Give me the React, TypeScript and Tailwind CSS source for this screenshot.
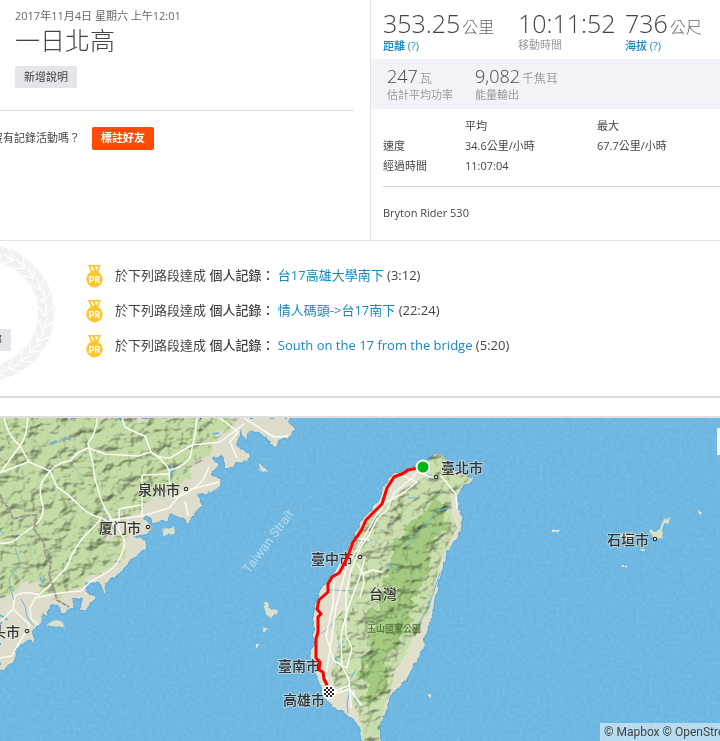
const stats = [
    { value: "353.25", unit: "公里", label: "距離 (?)", link: true },
    { value: "10:11:52", unit: "", label: "移動時間", link: false },
    { value: "736", unit: "公尺", label: "海拔 (?)", link: true },
];

const power = [
    { value: "247", unit: "瓦", label: "估計平均功率" },
    { value: "9,082", unit: "千焦耳", label: "能量輸出" },
];

const records = [
    { segment: "台17高雄大學南下", time: "(3:12)" },
    { segment: "情人碼頭->台17南下", time: "(22:24)" },
    { segment: "South on the 17 from the bridge", time: "(5:20)" },
];

// map labels, dot = city marker
const cities = [
    { name: "泉州市", x: 138, y: 77, dot: [186, 71] },
    { name: "厦门市", x: 99, y: 115, dot: [148, 109] },
    { name: "汕头市", x: -22, y: 219, dot: [27, 213] },
    { name: "臺北市", x: 441, y: 55, dot: [436, 59] },
    { name: "臺中市", x: 311, y: 146, dot: [360, 139] },
    { name: "臺南市", x: 278, y: 253, dot: [319, 247] },
    { name: "高雄市", x: 283, y: 287, dot: null },
    { name: "石垣市", x: 607, y: 127, dot: [655, 121] },
    { name: "台灣", x: 369, y: 181, dot: null },
];

const MAINLAND =
    "M0 0H290L288 4L294 10L289 22L281 20L277 24L274 30L270 28L267 20L257 14L248 12L246 22L242 18L241 12L236 22L240 31L250 37L247 44L236 43L232 50L226 50L223 38L213 40L218 47L212 57L220 62L219 68L213 74L197 76L202 87L194 95L188 105L182 99L170 95L168 102L153 105L147 95L143 101L152 108L147 115L133 119L145 122L147 129L133 139L128 146L120 154L115 159L105 165L104 177L100 165L85 164L86 174L95 179L92 184L87 192L80 192L83 180L73 179L72 190L62 194L58 186L50 188L48 197L43 194L40 205L32 213L34 225L27 222L15 232L14 245L0 252Z";

const MAINLAND_HILLS =
    "M0 0H240L214 24L205 42L192 48L180 72L166 74L150 80L138 95L108 104L105 112L124 120L126 140L103 156L82 158L78 171L58 177L45 174L35 164L15 170L12 178L0 180Z";

const TAIWAN =
    "M423 49L428 41L435 35L443 38L446 47L460 54L473 60L463 69L457 78L458 91L463 102L457 119L445 135L446 141L441 155L437 175L430 202L422 232L413 249L405 264L392 275L388 289L380 305V323H362L358 305L348 298L337 290L325 281L318 262L315 246L309 239L314 228V195L319 175L331 160L341 148L352 122L362 102L378 85L384 69L393 56L407 51Z";

const TAIWAN_HILLS =
    "M428 41L435 35L443 38L446 47L460 55L472 60L461 68L456 78L450 74L453 100L457 110L442 137L437 158L429 190L417 215L407 233L394 255L391 273L381 300L379 323H364L360 300L353 287L356 271L336 273L331 255L338 228L335 202L347 188L350 170L352 130L358 112L372 100L388 86L402 72L420 62L430 56Z";

const TAIWAN_RIDGE =
    "M437 77L445 88L443 106L431 132L428 151L423 170L414 188L402 220L389 238L386 260L374 285L366 295L370 270L362 259L364 239L374 219L371 199L380 179L385 158L397 137L396 121L414 105L424 91Z";

const ROUTE =
    "M423 49L408 52L404 55L394 59L387 70L382 86L375 93L366 102L361 113L353 124L348 138L342 150L339 155L332 159L328 166L328 174L319 182L317 191L321 196L318 199L318 214L316 221L316 240L320 244L319 252L323 254L324 261L328 269";

function Laurel() {
    // leaves around the ring, one pair for every step
    const steps = Array.from({ length: 15 }, (_, i) => -92 + i * 13);
    return (
        <svg viewBox="0 0 56 140" className="h-[140px] w-14" aria-hidden="true">
            <g transform="translate(-14 70)">
                <circle r="60" fill="none" stroke="#f2f2f2" strokeWidth="16" />
                {steps.map((a) => (
                    <path
                        key={a}
                        d="M51 -6L59 4L70 -8M59 4L61 -8"
                        fill="none"
                        stroke="#fff"
                        strokeWidth="1.2"
                        transform={`rotate(${a})`}
                    />
                ))}
            </g>
        </svg>
    );
}

function Medal() {
    return (
        <svg viewBox="0 0 17 24" className="h-6 w-[17px] shrink-0" aria-hidden="true">
            <path d="M2 1H15L12 8.500H5Z" fill="#ffc72f" />
            <path d="M4.500 2.500H6.500L8.500 6.500H6.500ZM9 2.500H12.500L10.500 6.500Z" fill="#fff" />
            <circle cx="8.500" cy="15.200" r="8.200" fill="#ffc72f" />
            <text
                x="8.500"
                y="18.500"
                textAnchor="middle"
                fontFamily="Roboto, sans-serif"
                fontSize="9"
                fontWeight="700"
                fill="#fff"
            >
                PR
            </text>
        </svg>
    );
}

function RouteMap() {
    return (
        <svg
            viewBox="0 0 720 323"
            preserveAspectRatio="xMidYMid slice"
            className="block min-h-[323px] w-full bg-[#6db6e0]"
            role="img"
            aria-label="台灣"
        >
            <defs>
                <filter id="relief" x="0" y="0" width="100%" height="100%" colorInterpolationFilters="sRGB">
                    <feTurbulence type="fractalNoise" baseFrequency="0.06 0.08" numOctaves="3" seed="8" />
                    <feColorMatrix values="0 0 0 0 0  0 0 0 0 0  0 0 0 0 0  1 0 0 0 0" />
                    <feDiffuseLighting surfaceScale="6" diffuseConstant="1.2" lightingColor="#ffffff">
                        <feDistantLight azimuth="220" elevation="60" />
                    </feDiffuseLighting>
                </filter>
                <filter id="ripples" x="0" y="0" width="100%" height="100%" colorInterpolationFilters="sRGB">
                    <feTurbulence type="fractalNoise" baseFrequency="0.3" numOctaves="2" seed="3" />
                    <feColorMatrix values="0 0 0 0 0.6  0 0 0 0 0.85  0 0 0 0 0.97  1.6 0 0 0 -0.65" />
                </filter>
                <filter id="coast" colorInterpolationFilters="sRGB">
                    <feTurbulence type="fractalNoise" baseFrequency="0.12" numOctaves="2" seed="5" />
                    <feDisplacementMap in="SourceGraphic" scale="6" xChannelSelector="R" yChannelSelector="G" />
                </filter>
                {/* ragged edge between the plains and the hills */}
                <filter id="slopes" colorInterpolationFilters="sRGB">
                    <feTurbulence type="fractalNoise" baseFrequency="0.08" numOctaves="3" seed="11" />
                    <feDisplacementMap in="SourceGraphic" scale="22" xChannelSelector="R" yChannelSelector="G" />
                </filter>
                <clipPath id="hills">
                    <path d={MAINLAND_HILLS} />
                    <path d={TAIWAN_HILLS} />
                </clipPath>
            </defs>

            <rect width="720" height="323" fill="#6db6e0" />
            <rect width="720" height="323" filter="url(#ripples)" opacity="0.35" />

            {/* land */}
            <g filter="url(#coast)">
                <path d={MAINLAND} fill="#deddcb" stroke="#60a9d5" strokeWidth="2" paintOrder="stroke" />
                <path d={TAIWAN} fill="#e0e0cd" stroke="#60a9d5" strokeWidth="2" paintOrder="stroke" />
                <path d={TAIWAN_HILLS} fill="#cadeae" />
                <g fill="#dcdfca">
                    <path d="M257 46L263 49L267 54L261 53Z" />
                    <path d="M162 113L168 110L174 108L175 115L170 116L162 117Z" />
                    <path d="M47 205L55 202L63 203L64 209L50 208Z" />
                    <path d="M263 190L267 183L270 186L269 191L277 192L276 197L270 199Z" />
                    <path d="M262 210H266V213H262ZM256 226H258V229H256Z" />
                    <path d="M553 111H560V113H553ZM698 92L702 94L698 96Z" />
                    <path d="M621 116L632 114L634 119L628 121L620 119Z" fill="#cfe2ae" />
                    <path d="M649 112L657 113L662 108L667 99L670 98L664 108L662 121L654 122Z" />
                    <path d="M641 131H645V133H641ZM622 147H626V149H622ZM428 276H432V279H428Z" />
                </g>
            </g>
            <g filter="url(#slopes)">
                <path d={MAINLAND_HILLS} fill="#c4dba5" />
                <path d="M-12 -12H60V0H-12V180H-12Z" fill="#c4dba5" stroke="#c4dba5" strokeWidth="24" />
                <path d={TAIWAN_RIDGE} fill="#a3ca80" />
            </g>
            <rect
                width="720"
                height="323"
                clipPath="url(#hills)"
                filter="url(#relief)"
                opacity="0.6"
                className="mix-blend-multiply"
            />

            {/* inland water */}
            <g fill="none" stroke="#72b5de" strokeWidth="1">
                <path d="M50 26L57 23M62 22L67 20L71 22M171 47L173 53L170 56M213 16L219 15M184 53L187 51" strokeWidth="2" />
                <path d="M106 98L111 107L114 113M15 130L20 145L9 161L10 170L14 182M21 181L25 188L27 199L34 208M0 113L5 116" />
                <path d="M0 197L8 202M52 190L57 187M40 159L43 165" strokeWidth="2" />
                <path d="M452 89L437 93L426 106L414 119L408 128M408 80L416 80M425 55L432 58L428 62M353 121L362 123L372 122" />
                <path d="M440 155L433 176L428 189L418 208M330 172L354 173M322 215L334 205M350 270L347 286L348 295M356 252L343 272" />
                <path d="M387 146L393 150M343 223L339 230M335 240L338 247" strokeWidth="2" />
            </g>

            {/* roads */}
            <g fill="none" stroke="#fbfaf5" strokeWidth="1.500" strokeLinejoin="round">
                <path d="M4 0Q8 18 20 28L29 44L50 53L57 69Q66 74 80 88Q90 98 102 100L118 110L124 121Q125 130 122 135Q118 146 109 153L90 164L81 173Q60 174 35 180L30 190L31 201L39 207" />
                <path d="M28 0Q27 14 23 23L20 28L0 55L28 44M97 0Q97 14 88 25L93 46Q94 60 98 71Q101 84 107 94L112 102L134 109" />
                <path d="M50 53Q58 44 70 43Q78 33 88 30L105 36L138 38L151 34Q158 40 170 40Q180 34 192 27L220 24L244 6" />
                <path d="M122 0L125 9Q136 15 145 18L151 34Q164 42 169 52L170 75L176 80Q192 74 203 62L209 49M197 0L195 16L190 40Q182 50 169 52" />
                <path d="M220 0L238 14L230 24L237 40M244 0L274 19L288 18M143 57L169 56M142 57V98L109 102M0 125Q10 126 15 122L35 107Q44 100 43 88Q38 74 42 64L50 53" />
                <path d="M102 100L81 122L71 138Q68 150 62 154L51 166L39 177Q24 172 15 178L13 191L0 204M142 98L169 90L184 73L219 64M119 110V91L140 87M13 191L30 207L16 230L12 238L0 240M185 83L188 98" />
                <path d="M420 50L412 60L394 75L387 92L377 101L369 117L360 130L351 153L346 176L346 217L352 230L347 250L334 243L326 218L333 187L334 158L342 143" />
                <path d="M403 58L417 64L402 76L386 84L376 98L360 126L346 151L336 189L332 218L326 257L333 276L350 271M365 139L361 155L347 193L341 218L342 248L349 262L351 290" />
                <path d="M441 58L456 76L457 91M435 60L425 57M354 120L370 122M357 145L363 156L372 152L382 154M363 156L364 165L360 180M349 270L362 288M330 275L350 267" />
            </g>
            <path
                d="M0 76L3 85L9 90L13 101L24 98L36 97L34 111L44 125L45 137L51 145L49 157L54 171L57 182L69 189"
                fill="none"
                stroke="#9d9892"
                strokeWidth="2"
                strokeDasharray="5 1"
            />

            <text
                transform="translate(249 156) rotate(-53)"
                fontSize="13"
                fill="#b8daed"
                fontFamily="Roboto, sans-serif"
            >
                Taiwan Strait
            </text>

            {/* labels, with the pale halo under the glyphs */}
            <g
                fontSize="14"
                fontWeight="500"
                fill="#333"
                stroke="#eef2e8"
                strokeOpacity="0.5"
                strokeWidth="2"
                paintOrder="stroke"
            >
                {cities.map((city) => (
                    <text key={city.name} x={city.x} y={city.y}>
                        {city.name}
                    </text>
                ))}
                <text x="367" y="214" fontSize="9" fill="#4a7434" strokeWidth="0">
                    玉山國家公園
                </text>
            </g>
            {cities.map(
                (city) =>
                    city.dot && (
                        <circle
                            key={city.name}
                            cx={city.dot[0]}
                            cy={city.dot[1]}
                            r="1.700"
                            fill="#fff"
                            stroke="#333"
                            strokeWidth="1.200"
                        />
                    ),
            )}

            <path d={ROUTE} fill="none" stroke="#fe0000" strokeWidth="3" strokeLinejoin="round" />
            <circle cx="423" cy="49" r="6.500" fill="#00b50b" stroke="#fff" strokeWidth="2" />

            {/* finish flag */}
            <circle cx="329" cy="274" r="7" fill="#fff" />
            <g fill="#222">
                <path d="M326 269h2v2h-2zM330 269h2v2h-2zM324 271h2v2h-2zM328 271h2v2h-2zM332 271h2v2h-2zM326 273h2v2h-2zM330 273h2v2h-2zM324 275h2v2h-2zM328 275h2v2h-2zM332 275h2v2h-2zM326 277h2v2h-2zM330 277h2v2h-2z" />
            </g>
        </svg>
    );
}

export default function App() {
    return (
        <main className="overflow-hidden bg-white font-['Open_Sans','Noto_Sans_CJK_TC',sans-serif] text-[#444]">
            <section className="grid grid-cols-[37fr_35fr] border-b border-[#e4e4e8]">
                {/* SUMMARY */}
                <div className="min-w-0">
                    <div className="mr-4 border-b border-[#dfdfe8] pt-2 pb-[22px] pl-[15px]">
                        <time className="block text-[11px] leading-4 text-[#666]">2017年11月4日 星期六 上午12:01</time>
                        <h1 className="text-[25px] leading-8 font-light">一日北高</h1>
                        <button className="mt-[10px] h-[22px] rounded-xs bg-[#e5e4eb] px-[9px] text-[11px] leading-[22px]">
                            新增說明
                        </button>
                    </div>
                    <div className="-ml-2 flex items-center gap-3 pt-4 text-[11px]">
                        <p className="whitespace-nowrap">沒有記錄活動嗎？</p>
                        <button className="h-[23px] rounded-xs bg-[#fc4c02] px-[9px] font-bold text-white">標註好友</button>
                    </div>
                </div>

                {/* STATS */}
                <div className="min-w-0 border-l border-[#e4e4e8]">
                    <ul className="grid grid-cols-[135px_107px_1fr] pt-2 pb-[6px] pl-3 whitespace-nowrap">
                        {stats.map((item) => (
                            <li key={item.label}>
                                <div className="text-[25px] leading-[30px] font-light">
                                    {item.value}
                                    {item.unit && <span className="ml-[2px] text-base text-[#666]">{item.unit}</span>}
                                </div>
                                {item.link ? (
                                    <a href="#" className="block text-[11px] leading-[14px] font-medium text-[#1688bd]">
                                        {item.label}
                                    </a>
                                ) : (
                                    <div className="text-[11px] leading-[14px] text-[#999]">{item.label}</div>
                                )}
                            </li>
                        ))}
                    </ul>
                    <ul className="flex gap-[22px] bg-[#f3f2f8] pt-[7px] pb-[7px] pl-4 whitespace-nowrap">
                        {power.map((item) => (
                            <li key={item.label}>
                                <div className="text-lg leading-5 font-light">
                                    {item.value}
                                    <span className="ml-[2px] text-xs text-[#777]">{item.unit}</span>
                                </div>
                                <div className="text-[11px] leading-[15px] text-[#999]">{item.label}</div>
                            </li>
                        ))}
                    </ul>
                    <div className="pt-[7px] pl-3">
                        <table className="w-full table-fixed text-left text-[11px] leading-5">
                            <thead>
                                <tr>
                                    <th className="w-[82px]"></th>
                                    <th className="w-[132px] font-normal">平均</th>
                                    <th className="font-normal">最大</th>
                                </tr>
                            </thead>
                            <tbody>
                                <tr>
                                    <th className="font-normal">速度</th>
                                    <td>34.6公里/小時</td>
                                    <td>67.7公里/小時</td>
                                </tr>
                                <tr>
                                    <th className="font-normal">經過時間</th>
                                    <td>11:07:04</td>
                                </tr>
                            </tbody>
                        </table>
                        <p className="mt-[10px] border-t border-[#d4d4d8] pt-4 pb-[17px] text-[11px] leading-5">
                            Bryton Rider 530
                        </p>
                    </div>
                </div>
            </section>

            {/* ACHIEVEMENTS */}
            <section className="flex items-start border-b-2 border-[#dfdfdf] pb-[13px]">
                <div className="relative mt-[2px] w-[86px] shrink-0">
                    <Laurel />
                    <button className="absolute top-[86px] right-[75px] h-[22px] rounded-xs bg-[#e5e4eb] px-[9px] text-[11px] whitespace-nowrap">
                        查看全部
                    </button>
                </div>
                <ul className="min-w-0 pt-[17px] text-[13px] leading-[35px]">
                    {records.map((item) => (
                        <li key={item.segment} className="flex items-center gap-3 whitespace-nowrap">
                            <Medal />
                            <p>
                                於下列路段達成 <b className="font-medium">個人記錄：</b>{" "}
                                <a href="#" className="text-[#1688bd]">
                                    {item.segment}
                                </a>{" "}
                                {item.time}
                            </p>
                        </li>
                    ))}
                </ul>
            </section>

            {/* MAP */}
            <section className="relative mt-[18px] border-t-2 border-[#dfdfdf]">
                <RouteMap />
                <button aria-label="全螢幕" className="absolute top-[10px] right-0 h-[27px] w-[3px] bg-[#f3f2f8]"></button>
                <div className="absolute right-0 bottom-0 w-[120px] overflow-hidden bg-white/50 pl-1 font-[Roboto,sans-serif] text-xs leading-[18px] whitespace-nowrap">
                    <a href="#">© Mapbox</a> <a href="#">© OpenStreetMap</a>
                </div>
            </section>
        </main>
    );
}
